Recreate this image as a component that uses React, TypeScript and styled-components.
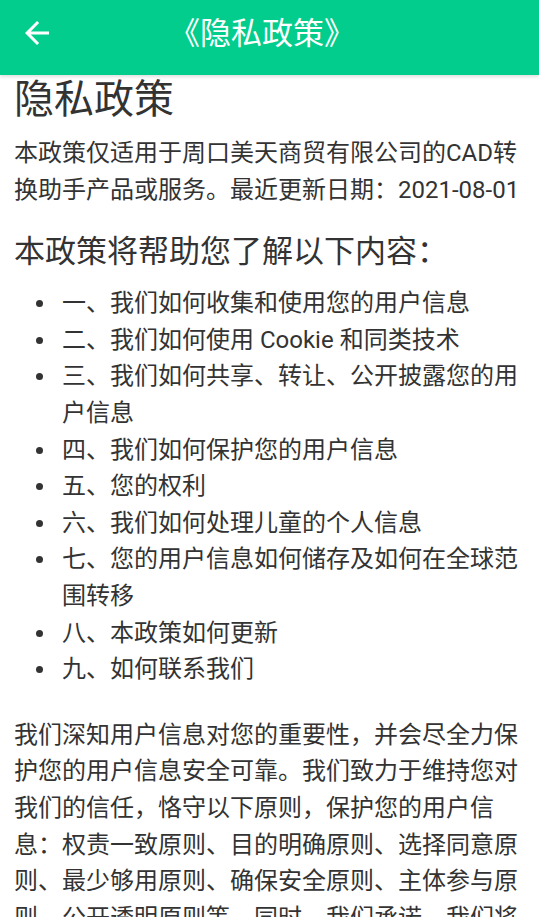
import styled, { createGlobalStyle } from "styled-components";

const GlobalStyle = createGlobalStyle`
    html, body {
        margin: 0;
        padding: 0;
        background: #fff;
    }
    body {
        font-family: Roboto, "Noto Sans CJK SC", sans-serif;
        color: #333;
    }
`

const sections = [
    "一、我们如何收集和使用您的用户信息",
    "二、我们如何使用 Cookie 和同类技术",
    "三、我们如何共享、转让、公开披露您的用户信息",
    "四、我们如何保护您的用户信息",
    "五、您的权利",
    "六、我们如何处理儿童的个人信息",
    "七、您的用户信息如何储存及如何在全球范围转移",
    "八、本政策如何更新",
    "九、如何联系我们",
]

function BackIcon() {
    return <svg width="36" height="36" viewBox="0 0 24 24" fill="#fff">
        <path d="M20 11H7.83l5.59-5.59L12 4l-8 8 8 8 1.41-1.41L7.83 13H20v-2z" />
    </svg>
}

export default function App() {
    return <Page>
        <GlobalStyle />
        <Header>
            <BackButton type="button"><BackIcon /></BackButton>
            <Title>《隐私政策》</Title>
        </Header>
        <Content>
            <Heading>隐私政策</Heading>
            <Paragraph>本政策仅适用于周口美天商贸有限公司的CAD转换助手产品或服务。最近更新日期：2021-08-01</Paragraph>
            <SubHeading>本政策将帮助您了解以下内容：</SubHeading>
            <List>
                {sections.map(s => <Item key={s}>{s}</Item>)}
            </List>
            <Paragraph $spaced>
                我们深知用户信息对您的重要性，并会尽全力保护您的用户信息安全可靠。我们致力于维持您对我们的信任，恪守以下原则，保护您的用户信息：权责一致原则、目的明确原则、选择同意原则、最少够用原则、确保安全原则、主体参与原则、公开透明原则等。同时，我们承诺，我们将按业界成熟的安全标准，采取相应的安全保护措施来保护您的用户信息。
            </Paragraph>
        </Content>
    </Page>
}

const Page = styled.div`
    width: 539px;
    height: 917px;
    overflow: hidden;
`

const Header = styled.header`
    position: relative;
    display: flex;
    align-items: center;
    height: 75px;
    background: #02cd8c;
    box-shadow: 0 2px 3px rgba(0, 0, 0, 0.12);
`

const BackButton = styled.button`
    position: absolute;
    left: 19px;
    top: 15px;
    display: flex;
    padding: 0;
    border: none;
    background: transparent;
`

const Title = styled.h2`
    flex: 1;
    margin: 0 0 8px;
    padding-right: 15px;
    text-align: center;
    font-size: 31px;
    font-weight: normal;
    color: #fff;
    line-height: 50px;
`

const Content = styled.main`
    padding: 0 14px;
`

const Heading = styled.h1`
    margin: 0 0 10px;
    font-size: 40px;
    font-weight: normal;
    line-height: 50px;
    color: #333;
`

const Paragraph = styled.p<{ $spaced?: boolean }>`
    margin: ${p => p.$spaced ? "29px" : "0"} 0 0;
    font-size: 24px;
    line-height: 36.6px;
`

const SubHeading = styled.h3`
    margin: 22px 0 11px;
    font-size: 31px;
    font-weight: normal;
    line-height: 44px;
`

const List = styled.ul`
    margin: 0;
    padding-left: 48px;
    list-style: none;
    font-size: 24px;
    line-height: 36.6px;
`

const Item = styled.li`
    position: relative;
    &::before {
        content: "";
        position: absolute;
        left: -26px;
        top: 15px;
        width: 7px;
        height: 7px;
        border-radius: 50%;
        background: #333;
    }
`
